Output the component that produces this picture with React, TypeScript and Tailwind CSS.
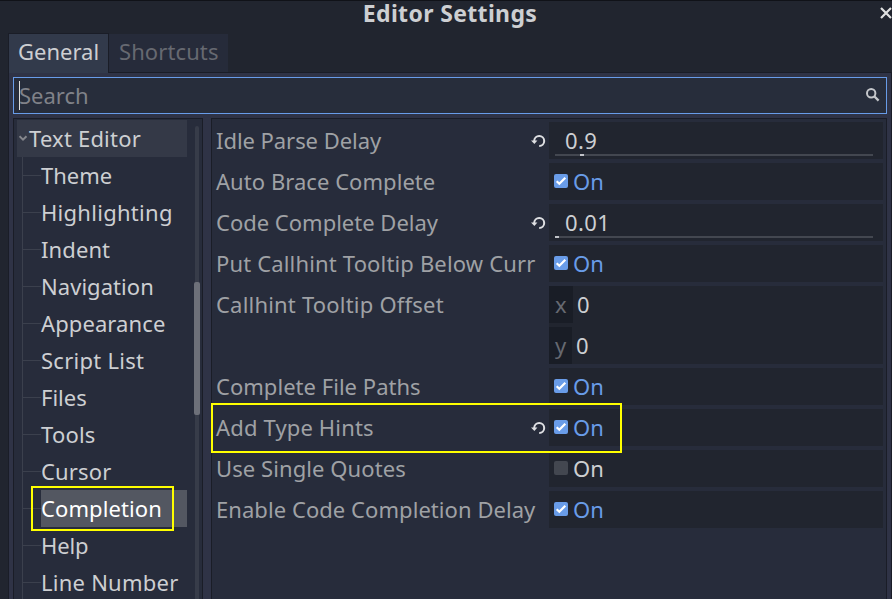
const treeItems = [
  { name: 'Theme', track: '' },
  { name: 'Highlighting', track: 'tracking-[0.28px]' },
  { name: 'Indent', track: 'tracking-[0.1px]' },
  { name: 'Navigation', track: 'tracking-[0.05px]' },
  { name: 'Appearance', track: 'tracking-[0.1px]' },
  { name: 'Script List', track: 'tracking-[0.27px]' },
  { name: 'Files', track: '' },
  { name: 'Tools', track: 'tracking-[0.2px]' },
  { name: 'Cursor', track: 'tracking-[0.15px]' },
  { name: 'Completion', track: 'tracking-[0.1px]' },
  { name: 'Help', track: 'tracking-[-0.1px]' },
  { name: 'Line Number', track: 'tracking-[0.24px]' },
];

type Setting = {
  label: string;
  kind: 'number' | 'check' | 'vector';
  track: string;
  value?: string;
  checked?: boolean;
  reset?: boolean;
  marked?: boolean;
  grab?: string;
};

const settings: Setting[] = [
  { label: 'Idle Parse Delay', kind: 'number', track: 'tracking-[-0.05px]', value: '0.9', reset: true, grab: 'ml-[25px]' },
  { label: 'Auto Brace Complete', kind: 'check', track: 'tracking-[0.05px]', checked: true },
  { label: 'Code Complete Delay', kind: 'number', track: '', value: '0.01', reset: true, grab: 'ml-0' },
  { label: 'Put Callhint Tooltip Below Curr', kind: 'check', track: 'tracking-[0.16px]', checked: true },
  { label: 'Callhint Tooltip Offset', kind: 'vector', track: 'tracking-[0.2px]' },
  { label: 'Complete File Paths', kind: 'check', track: 'tracking-[0.03px]', checked: true },
  { label: 'Add Type Hints', kind: 'check', track: 'tracking-[0.15px]', checked: true, reset: true, marked: true },
  { label: 'Use Single Quotes', kind: 'check', track: 'tracking-[0.08px]', checked: false },
  { label: 'Enable Code Completion Delay', kind: 'check', track: 'tracking-[0.06px]', checked: true },
];

function ResetIcon() {
  return (
    <svg width="15" height="14" viewBox="0 0 15 14" fill="none">
      <path d="M3.2 7A5 5 0 1 1 8.2 12" stroke="#dfe0e3" strokeWidth="2" />
      <path d="M0 6.4H6.4L3.4 10Z" fill="#dfe0e3" />
    </svg>
  );
}

function CheckBox({ checked }: { checked?: boolean }) {
  return (
    <span className={`flex h-[14px] w-[14px] rounded-[2px] ${checked ? 'bg-[#699ce8]' : 'bg-[#434750]'}`}>
      {checked && (
        <svg width="14" height="14" viewBox="0 0 14 14" fill="none">
          <path d="M2.7 7.3L5.3 9.8L11.3 3.7" stroke="#fff" strokeWidth="2.2" />
        </svg>
      )}
    </span>
  );
}

function Field({ s }: { s: Setting }) {
  if (s.kind === 'vector') {
    return (
      <div className="flex h-[78px] w-[334px] flex-col gap-1 bg-[#21252f]">
        <div className="flex h-[37px]">
          <span className="h-[37px] w-6 bg-[#191d26] pl-[6px] leading-[37px] text-[#666971]">x</span>
          <span className="pl-1 leading-[37px]">0</span>
        </div>
        <div className="flex h-[37px]">
          <span className="h-[37px] w-[23px] bg-[#191d26] pl-[6px] leading-[37px] text-[#666971]">y</span>
          <span className="pl-1 leading-[37px]">0</span>
        </div>
      </div>
    );
  }
  if (s.kind === 'number') {
    return (
      <div className="flex h-[37px] w-[334px] flex-col bg-[#21252f]">
        <span className="h-8 pl-4 leading-[37px] tracking-[0.4px]">{s.value}</span>
        <div className="ml-[6px] h-[2px] w-[318px] bg-[#434750]">
          <div className={`h-[2px] w-1 bg-[#c0c2c7] ${s.grab}`} />
        </div>
      </div>
    );
  }
  return (
    <div className="flex h-[37px] w-[334px] bg-[#21252f] pl-[5px] pt-[11px]">
      <CheckBox checked={s.checked} />
      <span className={`-mt-[11px] ml-[5px] leading-[37px] ${s.checked ? 'text-[#699ce8]' : 'text-[#cdcfd2]'}`}>On</span>
    </div>
  );
}

export default function App() {
  return (
    <div className="flex h-[599px] w-[892px] flex-col overflow-hidden whitespace-nowrap border-t border-[#101218] bg-[#21252f] font-['Noto_Sans',sans-serif] text-[22px] text-[#cdcfd2]">
      <header className="relative flex h-8 justify-center pl-2">
        <h1 className="text-[23px] font-bold leading-[25px] tracking-[0.35px]">Editor Settings</h1>
        <svg className="absolute left-[880px] top-[6px]" width="12" height="12" viewBox="0 0 12 12">
          <path d="M1 1L11 11M11 1L1 11" stroke="#e0e0e0" strokeWidth="2.2" />
        </svg>
      </header>
      <nav className="relative z-10 flex h-10 pl-2">
        <div className="h-10 w-[101px] border-x border-t border-[#1a1d27] bg-[#323a4b] pl-[9px] leading-[35px]">General</div>
        <div className="mt-px h-[38px] w-[119px] bg-[#262b3a] pl-[10px] leading-[35px] tracking-[0.1px] text-[#666971]">Shortcuts</div>
      </nav>
      <main className="-mt-px ml-2 flex h-[527px] w-[884px] flex-col border border-b-0 border-[#1a1d27] bg-[#2f3346] pl-1 pt-1">
        <div className="flex h-[37px] w-[874px] shrink-0 border border-[#689ce9] bg-[#272d3b] pl-[5px] pt-[3px]">
          <span className="h-[29px] w-px bg-[#e0e0e0]" />
          <span className="-ml-px -mt-[3px] flex-1 leading-[35px] text-[#808289]">Search</span>
          <svg className="mr-[6px] mt-[6px]" width="15" height="15" viewBox="0 0 15 15" fill="none" stroke="#c5c7cb">
            <circle cx="6.2" cy="6.2" r="4.2" strokeWidth="2" />
            <path d="M9 9L13.6 13.6" strokeWidth="2.3" />
          </svg>
        </div>
        <div className="mt-1 flex min-h-0 flex-1 gap-2">
          <aside className="flex h-[490px] w-[190px] border border-[#1a1d27] bg-[#272c3b] pl-[3px] pt-px">
            <div className="flex w-[170px] flex-col">
              <div className="flex h-[37px] shrink-0 bg-[#343947] pl-[2px]">
                <svg className="mt-[15px]" width="9" height="7" viewBox="0 0 9 7" fill="none">
                  <path d="M0.5 1.2L4 4.7L7.5 1.2" stroke="#85878d" strokeWidth="2" />
                </svg>
                <span className="ml-px leading-[37px] tracking-[0.2px]">Text Editor</span>
              </div>
              {treeItems.map(({ name, track }) => (
                <div key={name} className="flex h-[37px] shrink-0 pl-[5px]">
                  <div className="w-[19px] border-l border-[#3b404d]">
                    <div className="h-[19px] border-b border-[#3b404d]" />
                  </div>
                  <div className={`relative w-[146px] leading-[37px] ${track} ${name === 'Completion' ? 'bg-[#535761] text-white' : ''}`}>
                    {name}
                    {name === 'Completion' && (
                      <div className="absolute -left-[10px] -top-1 h-[45px] w-[143px] border-2 border-[#ffff00]" />
                    )}
                  </div>
                </div>
              ))}
            </div>
            <div className="ml-2 mt-[6px] h-[490px] w-1 rounded bg-[#373c49]">
              <div className="-ml-px mt-[156px] h-[133px] w-[6px] rounded-[2px] bg-[#6d7079]" />
            </div>
          </aside>
          <section className="flex h-[490px] w-[676px] flex-col gap-1 border border-[#1a1d27] bg-[#272c3b] pl-1 pt-[3px]">
            {settings.map((s) => (
              <div key={s.label} className="relative flex shrink-0 text-[#cdcfd2]">
                <span className={`w-[315px] leading-[37px] text-[#9fa1a5] ${s.track}`}>{s.label}</span>
                <span className="h-[37px] w-[18px] pt-3">{s.reset && <ResetIcon />}</span>
                <Field s={s} />
                {s.marked && <div className="absolute -left-[5px] -top-[6px] z-10 h-[50px] w-[411px] border-2 border-[#ffff00]" />}
              </div>
            ))}
          </section>
        </div>
      </main>
    </div>
  );
}
